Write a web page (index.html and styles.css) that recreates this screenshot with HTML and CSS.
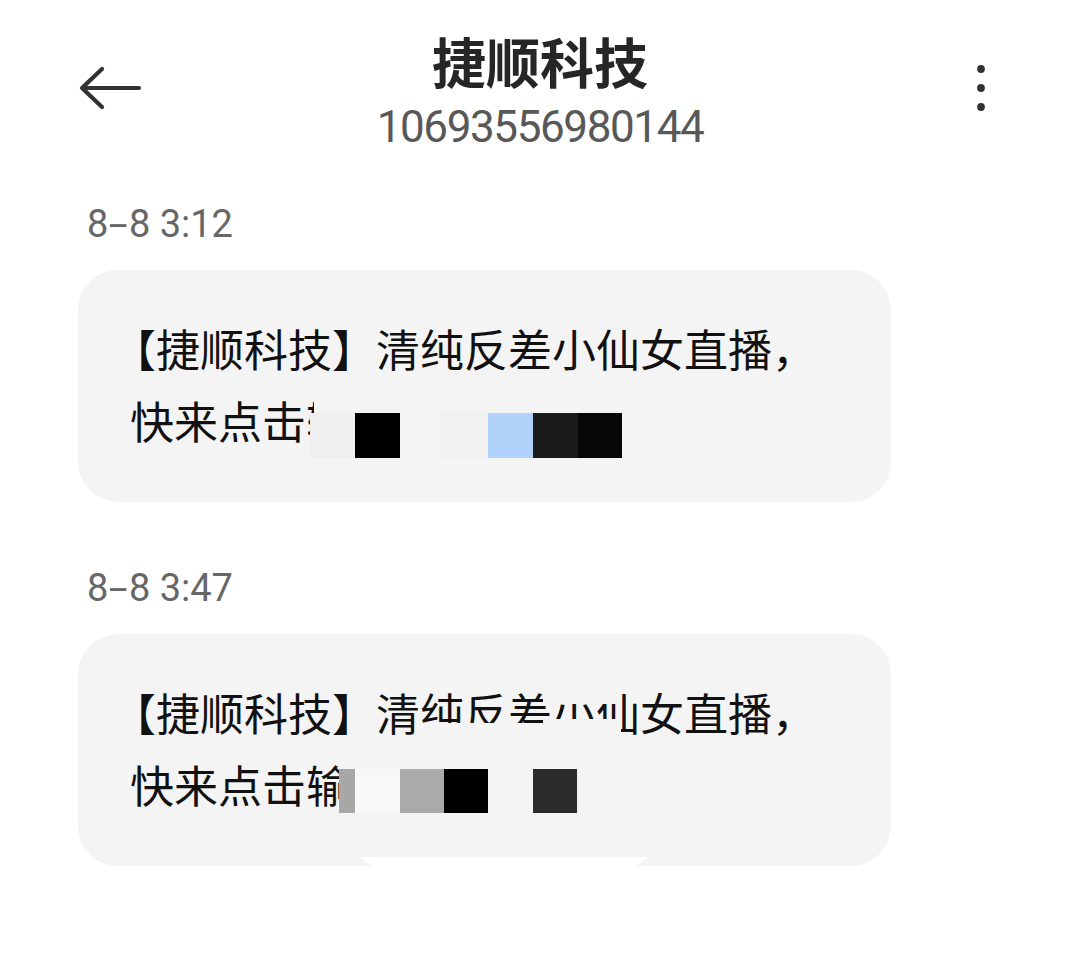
FILE: index.html
```html
<!DOCTYPE html>
<html lang="zh-CN">
<head>
<meta charset="utf-8">
<title>捷顺科技</title>
<link rel="stylesheet" href="styles.css">
</head>
<body>
<header class="topbar">
  <div class="nav-left">
    <svg class="back" viewBox="0 0 64 44" aria-label="返回">
      <path d="M61 22H4M24 3L4 22L24 41" fill="none" stroke="#333" stroke-width="4.2" stroke-linecap="round" stroke-linejoin="round"/>
    </svg>
  </div>
  <div class="title-block">
    <div class="title">捷顺科技</div>
    <div class="number">10693556980144</div>
  </div>
  <div class="nav-right">
    <svg class="more" viewBox="0 0 12 52" aria-label="更多">
      <circle cx="6" cy="7" r="3.9" fill="#333"/>
      <circle cx="6" cy="26" r="3.9" fill="#333"/>
      <circle cx="6" cy="45" r="3.9" fill="#333"/>
    </svg>
  </div>
</header>

<main class="thread">
  <section class="msg">
    <div class="time">8<span class="dash">-</span>8 3:12</div>
    <div class="bubble">
      <p class="text"><span class="lb">【</span>捷顺科技】清纯反差小仙女直播，<br>快来点击输</p>
      <span class="erase erase-top"></span>
      <div class="mosaic mosaic-a">
        <span class="tile t-lt1"></span><span class="tile t-black"></span><span class="tile t-gap"></span><span class="tile t-lt2"></span><span class="tile t-blue"></span><span class="tile t-d1"></span><span class="tile t-d2"></span>
      </div>
    </div>
  </section>

  <section class="msg">
    <div class="time">8<span class="dash">-</span>8 3:47</div>
    <div class="bubble">
      <p class="text"><span class="lb">【</span>捷顺科技】清纯反差小仙女直播，<br>快来点击输</p>
      <span class="erase erase-a"></span>
      <span class="erase erase-b"></span>
      <span class="erase erase-c"></span>
      <div class="mosaic mosaic-b">
        <span class="tile t-g1"></span><span class="tile t-w"></span><span class="tile t-g2"></span><span class="tile t-k"></span><span class="tile t-gap2"></span><span class="tile t-d3"></span>
      </div>
      <span class="notch"></span>
    </div>
  </section>
</main>
</body>
</html>
```

FILE: styles.css
```css
html, body {
  margin: 0;
  padding: 0;
  background: #ffffff;
}

body {
  font-family: "Noto Sans CJK SC", "Noto Sans", sans-serif;
  width: 1080px;
  height: 959px;
  overflow: hidden;
}

/* ---------- header ---------- */
.topbar {
  display: grid;
  grid-template-columns: 1fr auto 1fr;
  align-items: center;
  padding-top: 29px;
}

.nav-left {
  display: flex;
  padding-left: 78px;
  margin-top: -6px;
}

.back {
  display: block;
  width: 64px;
  height: 44px;
}

.nav-right {
  display: flex;
  justify-content: flex-end;
  padding-right: 93px;
  margin-top: -6px;
}

.more {
  display: block;
  width: 12px;
  height: 52px;
}

.title-block {
  text-align: center;
}

.title {
  font-size: 54px;
  line-height: 64px;
  font-weight: 700;
  color: #262626;
}

.number {
  margin-top: 8px;
  font-family: Roboto, "Liberation Sans", sans-serif;
  font-size: 44px;
  line-height: 52px;
  font-weight: 400;
  letter-spacing: -1.4px;
  color: #585858;
}

/* ---------- thread ---------- */
.thread {
  padding-top: 47px;
}

.msg + .msg {
  margin-top: 62px;
}

.time {
  padding-left: 87px;
  font-family: Roboto, "Liberation Sans", sans-serif;
  font-size: 38px;
  line-height: 48px;
  color: #676767;
}

.dash {
  display: inline-block;
  margin: 0 5px;
  transform: scaleX(1.8);
}

.bubble {
  position: relative;
  box-sizing: border-box;
  width: 813px;
  margin: 22px 0 0 78px;
  padding: 42px 0 46px 52px;
  background: #f4f4f4;
  border-radius: 40px;
}

.text {
  margin: 0;
  font-size: 44px;
  line-height: 72px;
  color: #111111;
  white-space: nowrap;
}

.lb {
  font-feature-settings: "halt";
  padding-left: 4px;
}

/* ---------- redaction mosaic (overlays the text) ---------- */
.mosaic {
  position: absolute;
  display: flex;
}

.mosaic-a {
  left: 232px;
  top: 143px;
  height: 45px;
}

.mosaic-b {
  left: 261px;
  top: 135px;
  height: 44px;
}

.tile {
  display: block;
  height: 100%;
}

.t-lt1 { width: 45px; background: #efefef; }
.t-black { width: 45px; background: #000000; }
.t-gap { width: 40px; background: transparent; }
.t-lt2 { width: 48px; background: #f1f1f1; }
.t-blue { width: 45px; background: #b1d2fb; }
.t-d1 { width: 45px; background: #1b1b1b; }
.t-d2 { width: 44px; background: #070707; }

.t-g1 { width: 16px; background: #a7a7a7; }
.t-w { width: 45px; background: #f8f8f8; }
.t-g2 { width: 44px; background: #aaaaaa; }
.t-k { width: 44px; background: #000000; }
.t-gap2 { width: 45px; background: transparent; }
.t-d3 { width: 44px; background: #2b2b2b; }

.erase {
  position: absolute;
  background: #f4f4f4;
}

.erase-top {
  left: 236px;
  top: 124px;
  width: 48px;
  height: 19px;
}

.erase-a {
  left: 343px;
  top: 89px;
  width: 122px;
  height: 28px;
}

.erase-b {
  left: 465px;
  top: 85px;
  width: 78px;
  height: 32px;
}

.erase-c {
  left: 465px;
  top: 56px;
  width: 78px;
  height: 14px;
}

.notch {
  position: absolute;
  left: 282px;
  bottom: 0;
  width: 288px;
  height: 9px;
  background: #ffffff;
  clip-path: polygon(0 0, 100% 0, 96% 100%, 4% 100%);
}
```
